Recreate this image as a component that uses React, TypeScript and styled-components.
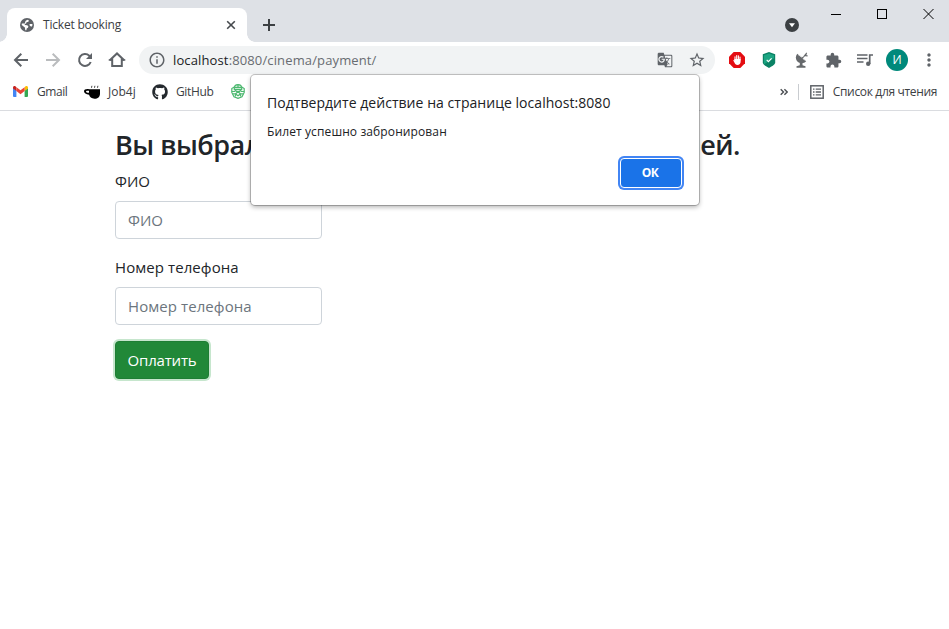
import React from "react";
import styled, { createGlobalStyle } from "styled-components";
import {
  MdInfoOutline,
  MdGTranslate,
  MdStarBorder,
  MdExtension,
  MdMoreVert,
} from "react-icons/md";
import { FaGithub } from "react-icons/fa";

const GlobalStyle = createGlobalStyle`
  * { box-sizing: border-box; }
  body {
    margin: 0;
    overflow: hidden;
    background: #fff;
    font-family: "Open Sans", "Noto Sans", sans-serif;
  }
`;

const Window = styled.div`
  position: relative;
  width: 949px;
  height: 629px;
  display: flex;
  flex-direction: column;
  background: #fff;
  overflow: hidden;
`;

const TabStrip = styled.header`
  height: 42px;
  flex: none;
  display: flex;
  align-items: flex-end;
  padding-left: 7px;
  background: #dee1e6;
`;

const Tab = styled.div`
  position: relative;
  width: 240px;
  height: 34px;
  display: flex;
  align-items: center;
  padding: 0 9px 0 13px;
  border-radius: 8px 8px 0 0;
  background: #fff;
  color: #45494d;
  &::before,
  &::after {
    content: "";
    position: absolute;
    bottom: 0;
    width: 8px;
    height: 8px;
  }
  &::before {
    left: -8px;
    background: radial-gradient(circle at 0 0, transparent 7.5px, #fff 8px);
  }
  &::after {
    right: -8px;
    background: radial-gradient(circle at 100% 0, transparent 7.5px, #fff 8px);
  }
  svg { flex: none; }
`;

const Label = styled.span<{ $size?: number; $spacing?: number; $color?: string }>`
  font-size: ${(p) => p.$size ?? 12}px;
  letter-spacing: ${(p) => p.$spacing ?? 0}px;
  color: ${(p) => p.$color ?? "#3c4043"};
  line-height: 18px;
  white-space: nowrap;
`;

const TabTitle = styled(Label)`
  flex: 1;
  margin-left: 9px;
`;

const NewTab = styled.div`
  width: 44px;
  height: 34px;
  display: grid;
  place-items: center;
  color: #3c4043;
`;

const WindowControls = styled.div`
  align-self: flex-start;
  display: flex;
  align-items: flex-start;
  margin: 9px 15px 0 auto;
  svg { display: block; }
`;

const TabSearch = styled.div`
  margin: 9px 32px 0 0;
`;

const ControlIcon = styled.div<{ $gap?: number }>`
  margin-right: ${(p) => p.$gap ?? 0}px;
`;

const Toolbar = styled.div`
  height: 36px;
  flex: none;
  display: flex;
  align-items: center;
  padding: 0 10px 0 11px;
  color: #5f6368;
`;

const NavIcon = styled.div<{ $faded?: boolean }>`
  width: 20px;
  height: 20px;
  margin-right: 12px;
  color: ${(p) => (p.$faded ? "#babcbe" : "#5f6368")};
  svg { display: block; }
`;

const AddressBar = styled.div`
  width: 576px;
  height: 28px;
  display: flex;
  align-items: center;
  padding: 0 9px 0 9px;
  border-radius: 14px;
  background: #f1f3f4;
  svg { flex: none; }
`;

const Url = styled(Label)`
  flex: 1;
  margin-left: 7px;
  b { font-weight: 400; color: #202124; }
`;

const AddressActions = styled.div`
  display: flex;
  align-items: center;
  gap: 15px;
`;

const Extensions = styled.div`
  flex: 1;
  display: flex;
  align-items: center;
  margin-left: 12px;
  svg { display: block; flex: none; }
`;

const ExtensionSlot = styled.div<{ $width?: number }>`
  width: ${(p) => p.$width ?? 32}px;
  flex: none;
  display: flex;
  justify-content: center;
`;

const Avatar = styled.div`
  width: 22px;
  height: 22px;
  border-radius: 50%;
  background: #00897b;
  color: #fff;
  font-size: 12px;
  line-height: 22px;
  text-align: center;
`;

const BookmarksBar = styled.nav`
  height: 33px;
  flex: none;
  display: flex;
  align-items: center;
  padding: 0 12px 5px 13px;
  border-bottom: 1px solid #dadce0;
`;

const Bookmark = styled.div<{ $icon: number; $gap: number; $width?: number }>`
  width: ${(p) => (p.$width ? p.$width + "px" : "auto")};
  display: grid;
  grid-template-columns: ${(p) => p.$icon}px auto;
  column-gap: ${(p) => p.$gap}px;
  align-items: center;
  justify-content: start;
  svg { display: block; }
`;

const BookmarkTail = styled.div`
  margin-left: auto;
  display: flex;
  align-items: center;
`;

const Separator = styled.div`
  width: 1px;
  height: 16px;
  margin: 0 11px 0 10px;
  background: #c9ccd0;
`;

const Page = styled.main`
  flex: 1;
  display: flex;
  flex-direction: column;
  align-items: flex-start;
  padding: 17px 0 0 115px;
  color: #212529;
`;

const Heading = styled.h3`
  width: 625px;
  display: flex;
  justify-content: space-between;
  margin: 0 0 7px;
  font-size: 27px;
  font-weight: 600;
  letter-spacing: -0.5px;
  line-height: 34px;
  white-space: nowrap;
`;

const FieldLabel = styled.label<{ $spacing?: number }>`
  font-size: 15px;
  line-height: 24px;
  margin-bottom: 8px;
  letter-spacing: ${(p) => p.$spacing ?? 0}px;
`;

const Input = styled.input<{ $spacing?: number }>`
  width: 207px;
  height: 38px;
  margin: 0 0 16px;
  padding: 6px 12px;
  border: 1px solid #ced4da;
  border-radius: 4px;
  font: 15px/24px "Open Sans", "Noto Sans", sans-serif;
  letter-spacing: ${(p) => p.$spacing ?? 0}px;
  &::placeholder { color: #6c757d; opacity: 1; }
`;

const FormGroup = styled.div`
  display: flex;
  flex-direction: column;
`;

const PayButton = styled.button`
  width: 94px;
  height: 38px;
  padding: 0;
  border: 1px solid #1e7e34;
  border-radius: 4px;
  background: #218838;
  box-shadow: 0 0 0 2px #c6e6cd;
  color: #fff;
  font: 15px/24px "Open Sans", "Noto Sans", sans-serif;
  letter-spacing: -0.2px;
`;

const Dialog = styled.section`
  position: absolute;
  left: 251px;
  top: 75px;
  width: 448px;
  height: 130px;
  display: flex;
  flex-direction: column;
  padding: 17px 17px 17px 16px;
  border-radius: 4px;
  background: #fff;
  box-shadow: 0 0 0 1px rgba(0, 0, 0, 0.22), 0 2px 5px rgba(0, 0, 0, 0.32);
`;

const DialogTitle = styled(Label)`
  line-height: 22px;
`;

const DialogText = styled(Label)`
  margin-top: 9px;
`;

const OkButton = styled.button`
  align-self: flex-end;
  width: 62px;
  height: 30px;
  margin-top: 17px;
  padding: 0 2px 0 0;
  border: 1px solid #fff;
  border-radius: 4px;
  background: #1a73e8;
  box-shadow: 0 0 0 2px #4285f4;
  color: #fff;
  font: 700 12px/18px "Open Sans", "Noto Sans", sans-serif;
  letter-spacing: -0.5px;
`;

const StrokeIcon = styled.svg`
  display: block;
  fill: none;
  stroke: currentColor;
  stroke-width: 2;
`;

const BackIcon = () => (
  <StrokeIcon width="20" height="20" viewBox="0 0 20 20">
    <path d="M17 10H4.500M10.300 3.700L4 10l6.300 6.300" />
  </StrokeIcon>
);

const ForwardIcon = () => (
  <StrokeIcon width="20" height="20" viewBox="0 0 20 20">
    <path d="M3 10h12.500M9.700 3.700L16 10l-6.300 6.300" />
  </StrokeIcon>
);

const ReloadIcon = () => (
  <StrokeIcon width="20" height="20" viewBox="0 0 20 20">
    <path d="M15.700 12A6 6 0 1 1 14.300 5.700L15.500 7" />
    <path d="M17 3v6h-6z" fill="currentColor" stroke="none" />
  </StrokeIcon>
);

const HomeIcon = () => (
  <StrokeIcon width="20" height="20" viewBox="0 0 20 20">
    <path d="M2.800 10.200L10 3.400l7.200 6.800M5.200 8.500V16h9.600V8.500" />
    <path d="M1.700 10h3.500M14.800 10h3.500" strokeWidth="1.500" />
  </StrokeIcon>
);

const CloseTabIcon = () => (
  <StrokeIcon width="14" height="14" viewBox="0 0 14 14">
    <path d="M3.200 3.200l7.600 7.600M10.800 3.200l-7.600 7.600" strokeWidth="1.600" />
  </StrokeIcon>
);

const PlusIcon = () => (
  <StrokeIcon width="12" height="12" viewBox="0 0 12 12">
    <path d="M6 0v12M0 6h12" />
  </StrokeIcon>
);

const GlobeIcon = () => (
  <svg width="14" height="14" viewBox="0 0 14 14">
    <circle cx="7" cy="7" r="7" fill="#5f6368" />
    <path d="M7.300 1.700l1.700.800-.6 1.300-1.900.500-.4 1.300-1.400.400.200 1 2.300.200 1.200 1.100-.4 1.500-1.300.800-.300 1.700H5.300L4.900 9.600 1.700 6.900l.200-1.500 2.900.100L5.500 3zM9.500 6.100l2.900-.200v1.600l-1 1.200-1.600-.900z" fill="#fff" />
  </svg>
);

const TabSearchIcon = () => (
  <svg width="14" height="14" viewBox="0 0 14 14">
    <circle cx="7" cy="7" r="7" fill="#3c4043" />
    <path d="M4 5.3h6L7 9.2z" fill="#fff" />
  </svg>
);

const MinimizeIcon = () => (
  <svg width="10" height="10" viewBox="0 0 10 10"><path d="M0 5.5h10" stroke="#000" /></svg>
);
const MaximizeIcon = () => (
  <svg width="10" height="10" viewBox="0 0 10 10"><rect x=".5" y=".5" width="9" height="9" fill="none" stroke="#000" /></svg>
);
const CloseWindowIcon = () => (
  <svg width="11" height="10" viewBox="0 0 11 10"><path d="M.5 0l10 10M10.5 0l-10 10" stroke="#000" /></svg>
);

const BlockerIcon = () => (
  <svg width="16" height="16" viewBox="0 0 16 16">
    <path d="M4.7 0h6.6L16 4.7v6.6L11.3 16H4.7L0 11.3V4.7z" fill="#e40d12" />
    <path d="M6 8V4.800M7.700 7.5V3.600M9.400 7.5V3.800M11 8V5" stroke="#fff" strokeWidth="1.100" strokeLinecap="round" />
    <path d="M5.400 7h6.200v2.8c0 2-1.200 3.200-3.100 3.200-1.700 0-2.500-1-3.100-2.500L4.300 8.400c.2-.6.800-.4 1.100.2z" fill="#fff" />
  </svg>
);

const ShieldIcon = () => (
  <svg width="14" height="16" viewBox="0 0 14 16">
    <path d="M7 0l6.200 2.300v8.700C12.300 13 9.800 14.400 7 16 4.2 14.400 1.700 13 .8 11V2.300z" fill="#0b8265" />
    <path d="M7 1.500l5 1.700v3L2 12.200V3.200z" fill="#1ca582" />
    <path d="M4.700 7.900l1.700 1.700 3.200-3.200" fill="none" stroke="#fff" strokeWidth="1.200" />
  </svg>
);

const DishIcon = () => (
  <svg width="14" height="16" viewBox="0 0 14 16">
    <path d="M2.200 1.700C-.5 5.200 1 10 5 11c2.500.6 4.900-.2 6.200-1.800z" fill="#66696c" />
    <path d="M3.600 3.300c1.200-.3 5.600 3.400 5.900 5" fill="none" stroke="#e1e2e3" strokeWidth=".9" />
    <path d="M6 7l5.500-4.700M11.800.800l-2.200 2.700 3 .400" stroke="#66696c" strokeWidth="1.100" fill="none" />
    <path d="M4.800 10.500h2.700v2.700l3 1v1.500H1.500v-1.500l3.300-1z" fill="#66696c" />
  </svg>
);

const QueueIcon = () => (
  <svg width="16" height="14" viewBox="0 0 16 14">
    <path d="M0 2h10.500M0 5.500h10.500M0 9h6.500" stroke="#5f6368" strokeWidth="1.700" />
    <path d="M12.700 11V2H16" fill="none" stroke="#5f6368" strokeWidth="1.700" />
    <circle cx="11.200" cy="10.800" r="2.200" fill="#5f6368" />
  </svg>
);

const GmailIcon = () => (
  <svg width="15" height="11" viewBox="0 0 15 11">
    <path d="M0 2v8q0 1 1 1h2.400V4.600z" fill="#4285f4" />
    <path d="M15 2v8q0 1-1 1h-2.400V4.600z" fill="#34a853" />
    <path d="M11.600 1.200v3.900L15 2.500V1.600C15 .2 13.500-.4 12.400.500z" fill="#fbbc04" />
    <path d="M3.400 1.200v3.900L0 2.500V1.600C0 .2 1.500-.4 2.600.500z" fill="#c5221f" />
    <path d="M3.400 1.200l4.100 3.100 4.100-3.100v3.900L7.500 8.200 3.400 5.100z" fill="#ea4335" />
  </svg>
);

const CupIcon = () => (
  <svg width="16" height="14" viewBox="0 0 16 14">
    <path d="M5 4.200h11v4.500c0 3-2.200 5-5.500 5-3 0-5-1.700-5.400-3.900C2 9.400 0 8.300 0 6.300 0 4.500 2.300 3.700 5 4.200zm0 1.600c-1.700-.3-3-.2-3 .6s1.200 1.300 3 1.400z" fill="#000" fillRule="evenodd" />
    <path d="M7.500 2.800l.4-2M10.500 2.800l.4-2M13.500 2.800l.4-2" stroke="#444" />
  </svg>
);

const CrestIcon = () => (
  <svg width="14" height="15" viewBox="0 0 14 15" fill="none" stroke="#4db870" strokeWidth="1.200">
    <path d="M3.300 4.300C3.300 2 4.800.6 7 .6s3.700 1.400 3.700 3.700v1.300H3.300z" fill="#c9ead2" />
    <path d="M3.300 3L.8 4.600v3.800L3 12.700l4 1.700 4-1.700 2.200-4.300V4.600L10.700 3M4 3.500h6M7 .6v3" />
    <path d="M.8 7.500h3l1.500-1.700M13.200 7.500h-3L8.700 5.800M1.600 9.800h3l2.400-2 2.400 2h3M4 12.500l1-2.300 2 1.600 2-1.600 1 2.300M5 7.500h4" />
  </svg>
);

const ReadingListIcon = () => (
  <svg width="14" height="14" viewBox="0 0 14 14">
    <rect x=".8" y=".8" width="12.400" height="12.400" fill="none" stroke="#5f6368" strokeWidth="1.500" />
    <path d="M3 4.200h1.500M3 7h1.500M3 9.800h1.500M5.700 4.200H11M5.700 7H11M5.700 9.800H11" stroke="#5f6368" strokeWidth="1.300" />
  </svg>
);

const OverflowIcon = () => (
  <svg width="8" height="8" viewBox="0 0 8 8">
    <path d="M.7 1.200L3.500 4 .7 6.800M4.400 1.200L7.200 4 4.400 6.800" fill="none" stroke="#4a4e52" strokeWidth="1.400" />
  </svg>
);

export default function App() {
  return (
    <>
      <GlobalStyle />
      <Window>
        <TabStrip>
          <Tab>
            <GlobeIcon />
            <TabTitle $spacing={-0.2}>Ticket booking</TabTitle>
            <CloseTabIcon />
          </Tab>
          <NewTab><PlusIcon /></NewTab>
          <WindowControls>
            <TabSearch><TabSearchIcon /></TabSearch>
            <ControlIcon $gap={36}><MinimizeIcon /></ControlIcon>
            <ControlIcon $gap={36}><MaximizeIcon /></ControlIcon>
            <ControlIcon><CloseWindowIcon /></ControlIcon>
          </WindowControls>
        </TabStrip>

        <Toolbar>
          <NavIcon><BackIcon /></NavIcon>
          <NavIcon $faded><ForwardIcon /></NavIcon>
          <NavIcon><ReloadIcon /></NavIcon>
          <NavIcon><HomeIcon /></NavIcon>
          <AddressBar>
            <MdInfoOutline size={18} />
            <Url $size={13} $spacing={0.13} $color="#686c71">
              <b>localhost</b>:8080/cinema/payment/
            </Url>
            <AddressActions>
              <MdGTranslate size={16} />
              <MdStarBorder size={18} />
            </AddressActions>
          </AddressBar>
          <Extensions>
            <ExtensionSlot $width={20}><BlockerIcon /></ExtensionSlot>
            <ExtensionSlot $width={44}><ShieldIcon /></ExtensionSlot>
            <ExtensionSlot $width={21}><DishIcon /></ExtensionSlot>
            <ExtensionSlot $width={43}><MdExtension size={17} /></ExtensionSlot>
            <ExtensionSlot $width={20}><QueueIcon /></ExtensionSlot>
            <ExtensionSlot $width={44}><Avatar>И</Avatar></ExtensionSlot>
            <ExtensionSlot $width={20}><MdMoreVert size={20} /></ExtensionSlot>
          </Extensions>
        </Toolbar>

        <BookmarksBar>
          <Bookmark $icon={15} $gap={9} $width={71}>
            <GmailIcon /><Label $spacing={-0.45}>Gmail</Label>
          </Bookmark>
          <Bookmark $icon={16} $gap={8} $width={68}>
            <CupIcon /><Label>Job4j</Label>
          </Bookmark>
          <Bookmark $icon={16} $gap={8} $width={79}>
            <FaGithub size={16} color="#24292e" /><Label $spacing={-0.35}>GitHub</Label>
          </Bookmark>
          <CrestIcon />
          <BookmarkTail>
            <OverflowIcon />
            <Separator />
            <Bookmark $icon={14} $gap={9}>
              <ReadingListIcon /><Label $spacing={-0.34}>Список для чтения</Label>
            </Bookmark>
          </BookmarkTail>
        </BookmarksBar>

        <Page>
          <Heading>
            <span>Вы выбрали ряд 1 место 1,</span>
            <span>Сумма: 500 рублей.</span>
          </Heading>
          <FormGroup>
            <FieldLabel htmlFor="name">ФИО</FieldLabel>
            <Input id="name" placeholder="ФИО" />
          </FormGroup>
          <FormGroup>
            <FieldLabel htmlFor="phone" $spacing={0.08}>Номер телефона</FieldLabel>
            <Input id="phone" placeholder="Номер телефона" $spacing={0.08} />
          </FormGroup>
          <PayButton>Оплатить</PayButton>
        </Page>

        <Dialog role="dialog">
          <DialogTitle $size={14} $spacing={0.04} $color="#202124">
            Подтвердите действие на странице localhost:8080
          </DialogTitle>
          <DialogText $spacing={0.11} $color="#202124">Билет успешно забронирован</DialogText>
          <OkButton>ОК</OkButton>
        </Dialog>
      </Window>
    </>
  );
}
